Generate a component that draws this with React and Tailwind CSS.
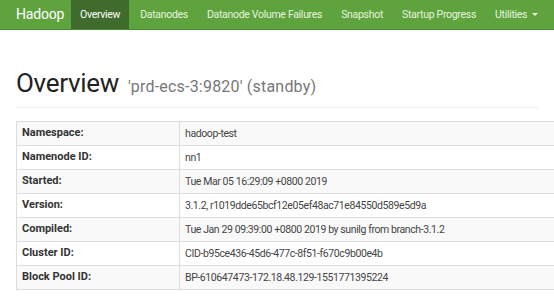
import React from "react";

const rows = [
  ["Namespace:", "hadoop-test"],
  ["Namenode ID:", "nn1"],
  ["Started:", "Tue Mar 05 16:29:09 +0800 2019"],
  ["Version:", "3.1.2, r1019dde65bcf12e05ef48ac71e84550d589e5d9a"],
  ["Compiled:", "Tue Jan 29 09:39:00 +0800 2019 by sunilg from branch-3.1.2"],
  ["Cluster ID:", "CID-b95ce436-45d6-477c-8f51-f670c9b00e4b"],
  ["Block Pool ID:", "BP-610647473-172.18.48.129-1551771395224"],
];

const navItems = ["Datanodes", "Datanode Volume Failures", "Snapshot", "Startup Progress"];

export default function App() {
  return (
    <div
      className="w-[554px] h-[307px] overflow-hidden bg-white text-[#333]"
      style={{ fontFamily: 'Roboto, "Noto Sans", sans-serif' }}
    >
      <div className="h-[30px] bg-[#5fa33e] border-b border-[#4f8a34] flex items-stretch text-[10.5px] tracking-[-0.3px] text-[#e6f3de] whitespace-nowrap">
        <div className="pl-[16px] pr-[7px] flex items-center text-[14px] tracking-[-0.2px] text-white">Hadoop</div>
        <div className="w-[58px] bg-[#3f6b2c] flex items-center justify-center text-white">Overview</div>
        <div className="flex items-center gap-[19px] pl-[11px]">
          {navItems.map((n) => (
            <span key={n}>{n}</span>
          ))}
          <span className="flex items-center gap-[5px]">
            Utilities
            <span className="w-0 h-0 border-l-[3px] border-r-[3px] border-t-[3px] border-l-transparent border-r-transparent border-t-[#e6f3de]" />
          </span>
        </div>
      </div>
      <div className="px-[16px]">
        <div className="mt-[37px] pb-[8px] border-b border-[#eee] flex items-baseline gap-[9px] whitespace-nowrap">
          <span className="text-[26px] leading-[32px] tracking-[-0.3px] text-[#222]">Overview</span>
          <span className="text-[16px] tracking-[0.2px] text-[#777]">'prd-ecs-3:9820' (standby)</span>
        </div>
        <table className="mt-[13px] w-[700px] border-collapse text-[10.5px] tracking-[-0.4px]">
          <tbody>
            {rows.map(([k, v], i) => (
              <tr key={k} className={i % 2 === 0 ? "bg-[#f9f9f9]" : "bg-white"}>
                <td className="w-[163px] h-[24px] px-[5px] border border-[#ddd] font-bold text-[11px] tracking-[0px] text-[#333]">{k}</td>
                <td className="h-[24px] px-[5px] border border-[#ddd] text-[#444] whitespace-nowrap">{v}</td>
              </tr>
            ))}
          </tbody>
        </table>
      </div>
    </div>
  );
}
